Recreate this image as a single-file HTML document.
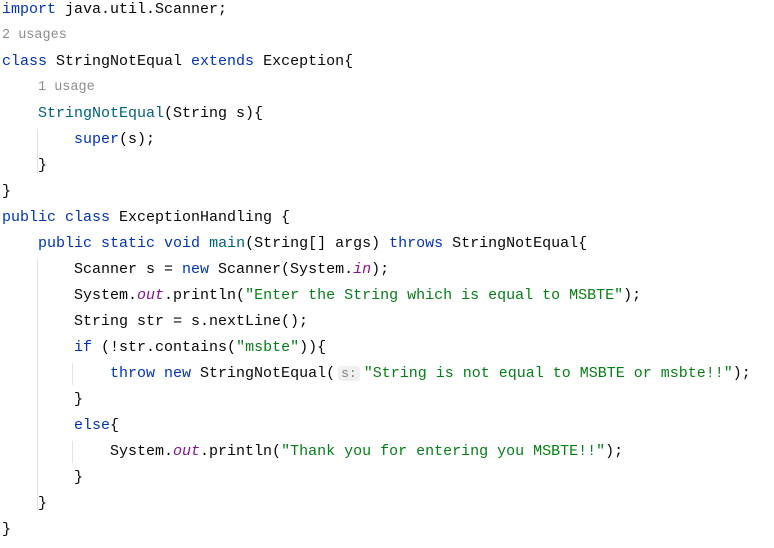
<!DOCTYPE html>
<html><head><meta charset="utf-8"><style>
html,body{margin:0;padding:0;background:#fff;width:774px;height:548px;overflow:hidden}
.c{position:absolute;left:2px;top:-3px;font-family:"Liberation Mono",monospace;font-size:15px;color:#080808}
.l{height:26px;line-height:26px;white-space:pre}
.k{color:#0033b3}.s{color:#067d17}.m{color:#00627a}.o{color:#871094;font-style:italic}
.g{color:#8c8c8c;font-size:13.5px}
.h{color:#808080;background:#f0f0f0;font-size:13px;border-radius:3px;padding:0 3px;margin:0 4px 0 3px}
.v{position:absolute;width:1px;background:#e4e4e4}
</style></head><body>
<div class="v" style="left:37px;top:129px;height:44px"></div>
<div class="v" style="left:37px;top:259px;height:252px"></div>
<div class="v" style="left:72px;top:363px;height:22px"></div>
<div class="v" style="left:72px;top:441px;height:22px"></div>
<div class="c">
<div class="l"><span class="k">import</span> java.util.Scanner;</div>
<div class="l g">2 usages</div>
<div class="l"><span class="k">class</span> StringNotEqual <span class="k">extends</span> Exception{</div>
<div class="l g" style="padding-left:36px">1 usage</div>
<div class="l">    <span class="m">StringNotEqual</span>(String s){</div>
<div class="l">        <span class="k">super</span>(s);</div>
<div class="l">    }</div>
<div class="l">}</div>
<div class="l"><span class="k">public class</span> ExceptionHandling {</div>
<div class="l">    <span class="k">public static void</span> <span class="m">main</span>(String[] args) <span class="k">throws</span> StringNotEqual{</div>
<div class="l">        Scanner s = <span class="k">new</span> Scanner(System.<span class="o">in</span>);</div>
<div class="l">        System.<span class="o">out</span>.println(<span class="s">"Enter the String which is equal to MSBTE"</span>);</div>
<div class="l">        String str = s.nextLine();</div>
<div class="l">        <span class="k">if</span> (!str.contains(<span class="s">"msbte"</span>)){</div>
<div class="l">            <span class="k">throw new</span> StringNotEqual(<span class="h">s:</span><span class="s">"String is not equal to MSBTE or msbte!!"</span>);</div>
<div class="l">        }</div>
<div class="l">        <span class="k">else</span>{</div>
<div class="l">            System.<span class="o">out</span>.println(<span class="s">"Thank you for entering you MSBTE!!"</span>);</div>
<div class="l">        }</div>
<div class="l">    }</div>
<div class="l">}</div>
</div>
</body></html>
